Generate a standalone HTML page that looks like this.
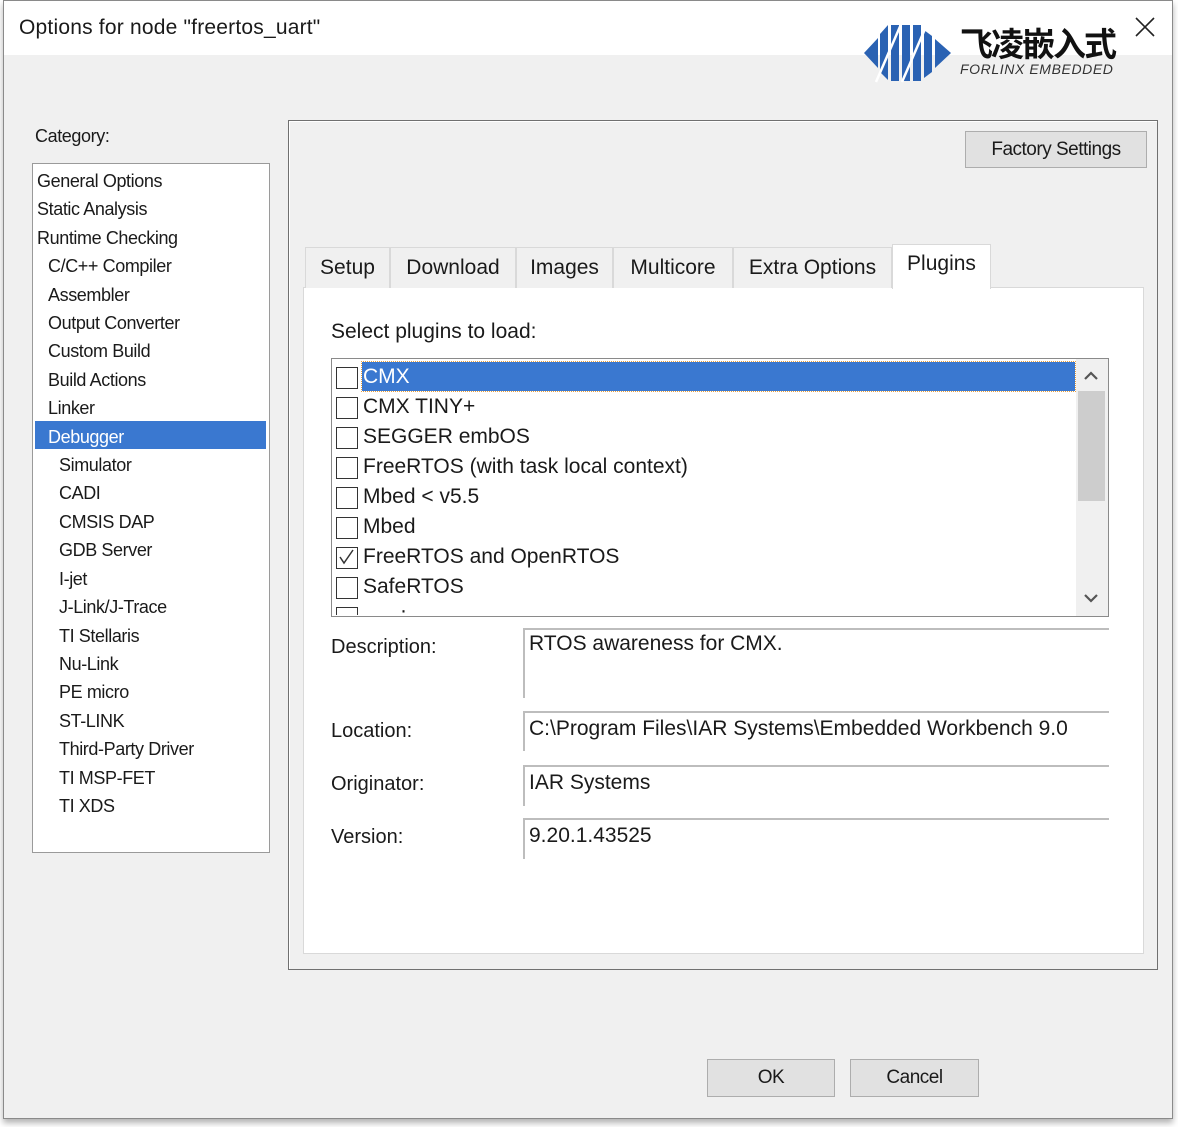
<!DOCTYPE html>
<html><head><meta charset="utf-8"><style>
*{margin:0;padding:0;box-sizing:border-box}
body{width:1178px;height:1127px;background:#fff;font-family:"Liberation Sans","Noto Sans CJK SC",sans-serif;position:relative;overflow:hidden;color:#1a1a1a}
.a{position:absolute}
.win{left:3px;top:0;width:1170px;height:1119px;background:#f0f0f0;border:1px solid #8a8a8a;box-shadow:0 4px 6px rgba(0,0,0,.3)}
.title{left:4px;top:1px;width:1168px;height:54px;background:#fff}
.t{font-size:21px;letter-spacing:0.2px}
.cat{font-size:18px;letter-spacing:-0.4px;white-space:nowrap}
.list{left:32px;top:163px;width:238px;height:690px;background:#fff;border:1px solid #9a9a9a}
.tab{top:247px;height:41px;background:#f0f0f0;border:1px solid #d9d9d9;border-bottom:none;font-size:21px;padding-top:8px;text-align:center;white-space:nowrap}
.pl{font-size:21px;white-space:nowrap;left:363px}
.cb{left:336px;width:22px;height:22px;border:1.5px solid #333;background:#fff}
.lab{left:331px;font-size:20px}
.fld{left:523px;width:586px;border-top:2px solid #bdbdbd;border-left:2px solid #bdbdbd;background:#fff;font-size:21px;padding:2px 0 0 4px;white-space:nowrap;overflow:hidden}
.btn{background:#e1e1e1;border:1px solid #adadad;font-size:19px;text-align:center;letter-spacing:-0.5px}
</style></head><body>
<div class="a win"></div>
<div class="a title"></div>
<div class="a t" style="left:19px;top:16px">Options for node "freertos_uart"</div>
<svg class="a" style="left:1133px;top:15px" width="24" height="24"><path d="M3 3 L21 21 M21 3 L3 21" stroke="#222" stroke-width="1.6"/></svg>
<svg class="a" style="left:862px;top:22px" width="92" height="62" viewBox="0 0 92 62">
<g fill="#2a62b3">
<polygon points="2,31 16,16 16,46"/>
<polygon points="18,12 26,3 26,58 18,50"/>
<polygon points="29,3 37,3 37,59 29,59"/>
<polygon points="40,3 48,3 48,59 40,59"/>
<polygon points="51,3 59,3 59,59 51,59"/>
<polygon points="62,8 70,14 70,50 62,56"/>
<polygon points="73,17 89,31 73,46"/>
</g>
<g stroke="#fff" stroke-width="2.5"><line x1="14" y1="60" x2="40" y2="0"/><line x1="40" y1="60" x2="66" y2="0"/></g>
</svg>
<div class="a" style="left:960px;top:22px;font-size:33px;font-weight:bold;letter-spacing:-2px;color:#111;font-family:'Noto Sans CJK SC',sans-serif;line-height:40px">飞凌嵌入式</div>
<div class="a" style="left:960px;top:61px;font-size:14px;font-style:italic;color:#333;letter-spacing:0.6px">FORLINX EMBEDDED</div>

<div class="a cat" style="left:35px;top:126px">Category:</div>
<div class="a list"></div>
<div class="a" style="left:35px;top:421px;width:231px;height:28px;background:#3a78d0"></div>
<div class="a cat" style="left:37px;top:167px;line-height:28.4px">
General Options<br>Static Analysis<br>Runtime Checking<br>
<span style="padding-left:11px">C/C++ Compiler</span><br>
<span style="padding-left:11px">Assembler</span><br>
<span style="padding-left:11px">Output Converter</span><br>
<span style="padding-left:11px">Custom Build</span><br>
<span style="padding-left:11px">Build Actions</span><br>
<span style="padding-left:11px">Linker</span><br>
<span style="padding-left:11px;color:#fff">Debugger</span><br>
<span style="padding-left:22px">Simulator</span><br>
<span style="padding-left:22px">CADI</span><br>
<span style="padding-left:22px">CMSIS DAP</span><br>
<span style="padding-left:22px">GDB Server</span><br>
<span style="padding-left:22px">I-jet</span><br>
<span style="padding-left:22px">J-Link/J-Trace</span><br>
<span style="padding-left:22px">TI Stellaris</span><br>
<span style="padding-left:22px">Nu-Link</span><br>
<span style="padding-left:22px">PE micro</span><br>
<span style="padding-left:22px">ST-LINK</span><br>
<span style="padding-left:22px">Third-Party Driver</span><br>
<span style="padding-left:22px">TI MSP-FET</span><br>
<span style="padding-left:22px">TI XDS</span>
</div>

<div class="a" style="left:288px;top:120px;width:870px;height:850px;border:1px solid #707070;box-shadow:inset 1px 1px 0 #fff"></div>
<div class="a btn" style="left:965px;top:131px;width:182px;height:37px;padding-top:7px">Factory Settings</div>

<div class="a" style="left:303px;top:287px;width:841px;height:667px;background:#fff;border:1px solid #d9d9d9"></div>
<div class="a tab" style="left:305px;width:85px">Setup</div>
<div class="a tab" style="left:390px;width:126px">Download</div>
<div class="a tab" style="left:516px;width:97px">Images</div>
<div class="a tab" style="left:613px;width:120px">Multicore</div>
<div class="a tab" style="left:733px;width:159px">Extra Options</div>
<div class="a tab" style="left:892px;top:244px;height:45px;width:99px;background:#fff;padding-top:7px">Plugins</div>

<div class="a lab" style="left:331px;top:320px;font-size:21px">Select plugins to load:</div>
<div class="a" style="left:331px;top:358px;width:778px;height:259px;border:1.5px solid #8a8a8a;background:#fff;overflow:hidden">
 <div class="a" style="left:30px;top:3px;width:713px;height:29px;background:#3a78d0;outline:1px dotted #e8a040"></div>
 <div class="a" style="left:744px;top:0;width:32px;height:257px;background:#f0f0f0"></div>
 <div class="a" style="left:746px;top:32px;width:27px;height:110px;background:#cdcdcd"></div>
 <svg class="a" style="left:751px;top:12px" width="16" height="10"><polyline points="2,8 8,2 14,8" fill="none" stroke="#555" stroke-width="2.2"/></svg>
 <svg class="a" style="left:751px;top:234px" width="16" height="10"><polyline points="2,2 8,8 14,2" fill="none" stroke="#555" stroke-width="2.2"/></svg>
</div>
<div class="a cb" style="top:367px"></div>
<div class="a cb" style="top:397px"></div>
<div class="a cb" style="top:427px"></div>
<div class="a cb" style="top:457px"></div>
<div class="a cb" style="top:487px"></div>
<div class="a cb" style="top:517px"></div>
<div class="a cb" style="top:547px"><svg width="19" height="19" style="position:absolute;left:0;top:0"><polyline points="3,9 7,15 16,2" fill="none" stroke="#333" stroke-width="1.5"/></svg></div>
<div class="a cb" style="top:577px"></div>
<div class="a" style="left:336px;top:607px;width:22px;height:8px;border:1.5px solid #333;border-bottom:none"></div>
<div class="a pl" style="top:365px;color:#fff">CMX</div>
<div class="a pl" style="top:395px">CMX TINY+</div>
<div class="a pl" style="top:425px">SEGGER embOS</div>
<div class="a pl" style="top:455px">FreeRTOS (with task local context)</div>
<div class="a pl" style="top:485px">Mbed &lt; v5.5</div>
<div class="a pl" style="top:515px">Mbed</div>
<div class="a pl" style="top:545px">FreeRTOS and OpenRTOS</div>
<div class="a pl" style="top:575px">SafeRTOS</div>
<div class="a pl" style="top:599px;left:400px;height:16px;overflow:hidden">·</div>

<div class="a lab" style="top:636px">Description:</div>
<div class="a lab" style="top:720px">Location:</div>
<div class="a lab" style="top:773px">Originator:</div>
<div class="a lab" style="top:826px">Version:</div>
<div class="a fld" style="top:628px;height:70px">RTOS awareness for CMX.</div>
<div class="a fld" style="top:711px;height:40px;padding-top:4px">C:\Program Files\IAR Systems\Embedded Workbench 9.0</div>
<div class="a fld" style="top:765px;height:41px;padding-top:4px">IAR Systems</div>
<div class="a fld" style="top:818px;height:41px;padding-top:4px">9.20.1.43525</div>

<div class="a btn" style="left:707px;top:1059px;width:128px;height:38px;padding-top:7px">OK</div>
<div class="a btn" style="left:850px;top:1059px;width:129px;height:38px;padding-top:7px">Cancel</div>
</body></html>
